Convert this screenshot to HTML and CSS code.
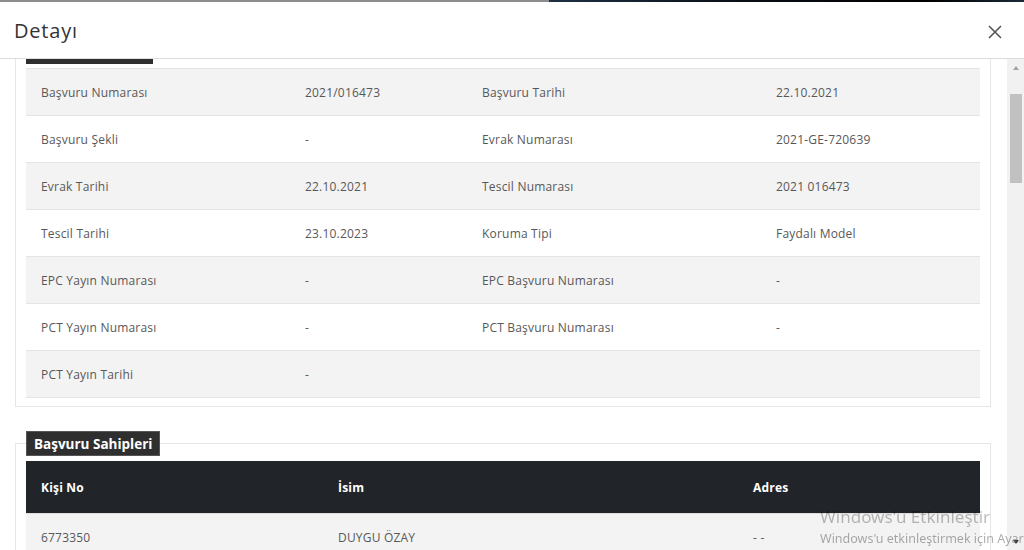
FILE: index.html
```html
<!DOCTYPE html>
<html lang="tr">
<head>
  <meta charset="UTF-8">
  <meta name="viewport" content="width=device-width, initial-scale=1.0">
  <title>Detayı</title>
  <link rel="stylesheet" href="styles.css">
</head>
<body>

  <div class="page-strip">
    <div class="strip-light"></div>
    <div class="strip-dark"></div>
  </div>

  <div class="modal">
    <div class="modal-header">
      <div class="modal-title">Detayı</div>
      <button class="close" aria-label="Kapat">
        <svg width="14" height="14" viewBox="0 0 14 14">
          <path d="M1 1 L13 13 M13 1 L1 13" stroke="#555" stroke-width="1.6" fill="none"/>
        </svg>
      </button>
    </div>

    <div class="modal-body">
      <div class="content">

        <fieldset class="panel panel-top">
          <legend></legend>
          <table class="info-table">
            <colgroup>
              <col style="width: 264px">
              <col style="width: 177px">
              <col style="width: 294px">
              <col style="width: 219px">
            </colgroup>
            <tr>
              <td>Başvuru Numarası</td><td>2021/016473</td>
              <td>Başvuru Tarihi</td><td>22.10.2021</td>
            </tr>
            <tr>
              <td>Başvuru Şekli</td><td>-</td>
              <td>Evrak Numarası</td><td>2021-GE-720639</td>
            </tr>
            <tr>
              <td>Evrak Tarihi</td><td>22.10.2021</td>
              <td>Tescil Numarası</td><td>2021 016473</td>
            </tr>
            <tr>
              <td>Tescil Tarihi</td><td>23.10.2023</td>
              <td>Koruma Tipi</td><td>Faydalı Model</td>
            </tr>
            <tr>
              <td>EPC Yayın Numarası</td><td>-</td>
              <td>EPC Başvuru Numarası</td><td>-</td>
            </tr>
            <tr>
              <td>PCT Yayın Numarası</td><td>-</td>
              <td>PCT Başvuru Numarası</td><td>-</td>
            </tr>
            <tr>
              <td>PCT Yayın Tarihi</td><td>-</td>
              <td></td><td></td>
            </tr>
          </table>
        </fieldset>

        <fieldset class="panel panel-owners">
          <legend>Başvuru Sahipleri</legend>
          <table class="owner-table">
            <colgroup>
              <col style="width: 297px">
              <col style="width: 415px">
              <col style="width: 242px">
            </colgroup>
            <tr>
              <th>Kişi No</th><th>İsim</th><th>Adres</th>
            </tr>
            <tr>
              <td>6773350</td><td>DUYGU ÖZAY</td><td>- -</td>
            </tr>
          </table>
        </fieldset>

      </div>

      <div class="scrollbar">
        <div class="sb-button"><span class="arrow-up"></span></div>
        <div class="sb-track"><div class="sb-thumb"></div></div>
        <div class="sb-button"><span class="arrow-down"></span></div>
      </div>
    </div>
  </div>

  <div class="watermark">
    <div class="wm-title">Windows'u Etkinleştir</div>
    <div class="wm-text">Windows'u etkinleştirmek için Ayarlar'a gidin.</div>
  </div>

</body>
</html>
```

FILE: styles.css
```css
/* Basic styling */
html, body {
  margin: 0;
  height: 550px;
  overflow: hidden;
}

body {
  font-family: "Open Sans", Arial, sans-serif;
  background: #fff;
  color: #555;
}

/* What is left of the page behind the modal */
.page-strip {
  display: flex;
  height: 2px;
}

.strip-light {
  width: 549px;
  background: #8c8c8c;
}

.strip-dark {
  flex: 1;
  background: linear-gradient(90deg, #1d3145, #0a0f16 40%, #000 80%, #1b2a3a);
}

/* Modal */
.modal {
  display: flex;
  flex-direction: column;
  height: 548px;
}

.modal-header {
  display: flex;
  align-items: center;
  justify-content: space-between;
  height: 56px;
  padding: 0 22px 0 14px;
  border-bottom: 1px solid #dcdcdc;
  flex-shrink: 0;
}

.modal-title {
  font-size: 20px;
  letter-spacing: 0.8px;
  color: #333;
  padding-top: 1px;
}

.close {
  background: none;
  border: none;
  padding: 0;
  width: 14px;
  height: 14px;
  margin-top: 3px;
  cursor: pointer;
}

.close svg {
  display: block;
}

.modal-body {
  flex: 1;
  display: flex;
  min-height: 0;
}

.content {
  flex: 1;
  overflow: hidden;
}

/* Panels */
.panel {
  margin: 0 16px 0 15px;
  padding: 4px 10px 8px;
  border: 1px solid #e6e6e6;
  min-width: 0;
}

.panel-top {
  margin-top: -20px;
}

.panel-owners {
  margin-top: 24px;
  padding-top: 5px;
}

.panel legend {
  background: #2f2f2f;
  color: #fff;
  font-weight: 700;
  font-size: 13.5px;
  height: 25px;
  line-height: 24px;
  padding: 0 7px;
  box-sizing: border-box;
  border: 1px solid #555;
  margin-left: 0;
}

/* scrolled up: only the bottom edge of this legend is in view */
.panel-top legend {
  width: 127px;
  border-color: #2f2f2f;
}

/* Tables */
table {
  width: 954px;
  border-collapse: collapse;
  table-layout: fixed;
  font-size: 12px;
  letter-spacing: 0.2px;
}

td, th {
  text-align: left;
  padding: 0 15px;
  white-space: nowrap;
}

.info-table td {
  height: 46px;
  border-top: 1px solid #e4e4e4;
  color: #585858;
}

.info-table tr:last-child td {
  border-bottom: 1px solid #e4e4e4;
}

.info-table tr:nth-child(odd) td {
  background: #f3f3f3;
}

.owner-table th {
  height: 52px;
  background: #212529;
  color: #fff;
  font-weight: 700;
}

.owner-table td {
  height: 47px;
  background: #f3f3f3;
  border-top: 1px solid #dcdcdc;
  color: #585858;
}

/* Scrollbar */
.scrollbar {
  width: 17px;
  display: flex;
  flex-direction: column;
  background: #f1f1f1;
  flex-shrink: 0;
}

.sb-button {
  height: 17px;
  display: flex;
  align-items: center;
  justify-content: center;
}

.arrow-up, .arrow-down {
  width: 0;
  height: 0;
  border-left: 3.5px solid transparent;
  border-right: 3.5px solid transparent;
}

.arrow-up {
  border-bottom: 4px solid #a3a3a3;
}

.arrow-down {
  border-top: 4px solid #505050;
}

.sb-track {
  flex: 1;
}

.sb-thumb {
  margin: 18px 2px 0 3px;
  height: 89px;
  background: #c1c1c1;
}

/* Windows activation watermark */
.watermark {
  position: fixed;
  left: 820px;
  top: 506px;
  white-space: nowrap;
  font-family: "Noto Sans", "Open Sans", sans-serif;
  color: rgba(0, 0, 0, 0.27);
  pointer-events: none;
}

.wm-title {
  font-size: 17px;
  line-height: 22px;
}

.wm-text {
  font-size: 12.5px;
  line-height: 18px;
  margin-top: 2px;
  color: rgba(0, 0, 0, 0.33);
}
```
